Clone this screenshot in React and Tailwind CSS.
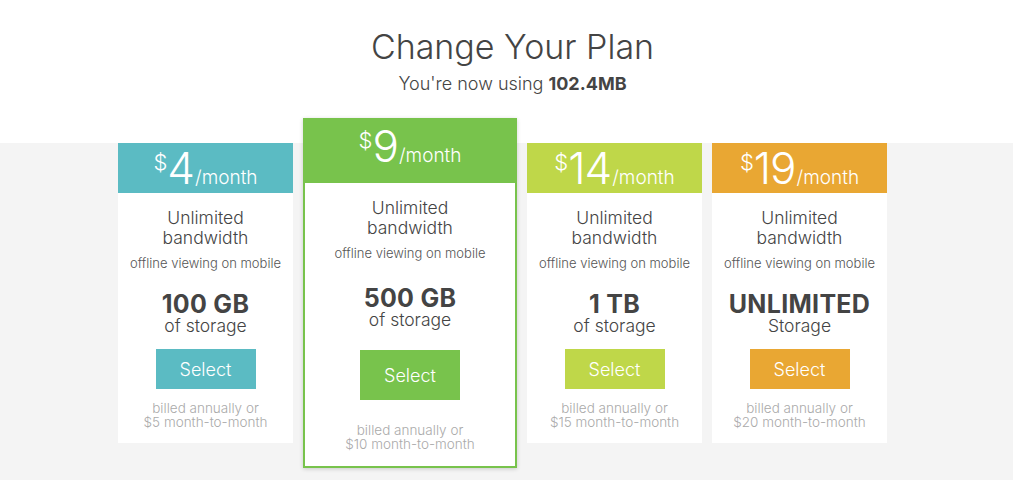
import React from 'react';

const plans = [
  { price: '4', color: 'bg-[#5bbbc3]', amount: '100 GB', unit: 'of storage', monthly: '$5' },
  { price: '9', color: 'bg-[#78c34c]', amount: '500 GB', unit: 'of storage', monthly: '$10', featured: true },
  { price: '14', color: 'bg-[#bfd749]', amount: '1 TB', unit: 'of storage', monthly: '$15' },
  { price: '19', color: 'bg-[#e9a733]', amount: 'UNLIMITED', unit: 'Storage', monthly: '$20' },
];

const PlanCard = ({ plan }) => {
  const { featured } = plan;
  return (
    <div
      className={
        featured
          ? 'w-[214px] h-[350px] -mt-[25px] bg-white border-2 border-[#78c34c] shadow-[0_1px_4px_rgba(0,0,0,0.18)] flex flex-col items-center'
          : 'w-[175px] h-[300px] bg-white flex flex-col items-center'
      }
    >
      <div
        className={`w-full ${featured ? 'h-[65px] -mt-[2px]' : 'h-[50px]'} ${plan.color} flex items-start justify-center text-white font-light`}
      >
        <div className={`flex items-baseline ${featured ? 'pt-[5px]' : 'pt-[2px]'}`}>
          <span className="text-[22px] leading-none self-start mt-[6px]">$</span>
          <span className="text-[44px] leading-[46px] tracking-[-1px]">{plan.price}</span>
          <span className="text-[19px] leading-none ml-[1px]">/month</span>
        </div>
      </div>
      <div className="mt-[15px] text-[17.5px] leading-[20px] text-[#444] font-light text-center">
        Unlimited
        <br />
        bandwidth
      </div>
      <div className="mt-[7px] text-[13px] leading-[16px] text-[#555] font-light whitespace-nowrap">offline viewing on mobile</div>
      <div className={`${featured ? 'mt-[25px]' : 'mt-[21px]'} text-[25px] leading-[24px] tracking-[0.3px] font-bold text-[#444]`}>{plan.amount}</div>
      <div className="text-[17.5px] leading-[20px] font-light text-[#444]">{plan.unit}</div>
      <button
        className={`w-[100px] ${featured ? 'h-[50px] mt-[20px]' : 'h-[40px] mt-[13px]'} ${plan.color} text-white text-[18px] font-light`}
      >
        Select
      </button>
      <div className={`${featured ? 'mt-[23px]' : 'mt-[12px]'} text-[13.5px] leading-[14px] text-[#aaa] font-light text-center`}>
        billed annually or
        <br />
        {plan.monthly} month-to-month
      </div>
    </div>
  );
};

export default function App() {
  return (
    <div className="w-[1013px] h-[480px] overflow-hidden bg-white font-['Inter',sans-serif]">
      <div className="h-[143px] pt-[27px] pl-[12px] text-center text-[#444]">
        <h1 className="text-[34px] leading-[40px] font-light">Change Your Plan</h1>
        <p className="mt-[6px] text-[18px] leading-[22px] font-light">
          You're now using <span className="font-bold">102.4MB</span>
        </p>
      </div>
      <div className="h-[337px] bg-[#f4f4f4]">
        <div className="flex items-start gap-[10px] pl-[118px]">
          {plans.map((p) => (
            <PlanCard key={p.price} plan={p} />
          ))}
        </div>
      </div>
    </div>
  );
}
